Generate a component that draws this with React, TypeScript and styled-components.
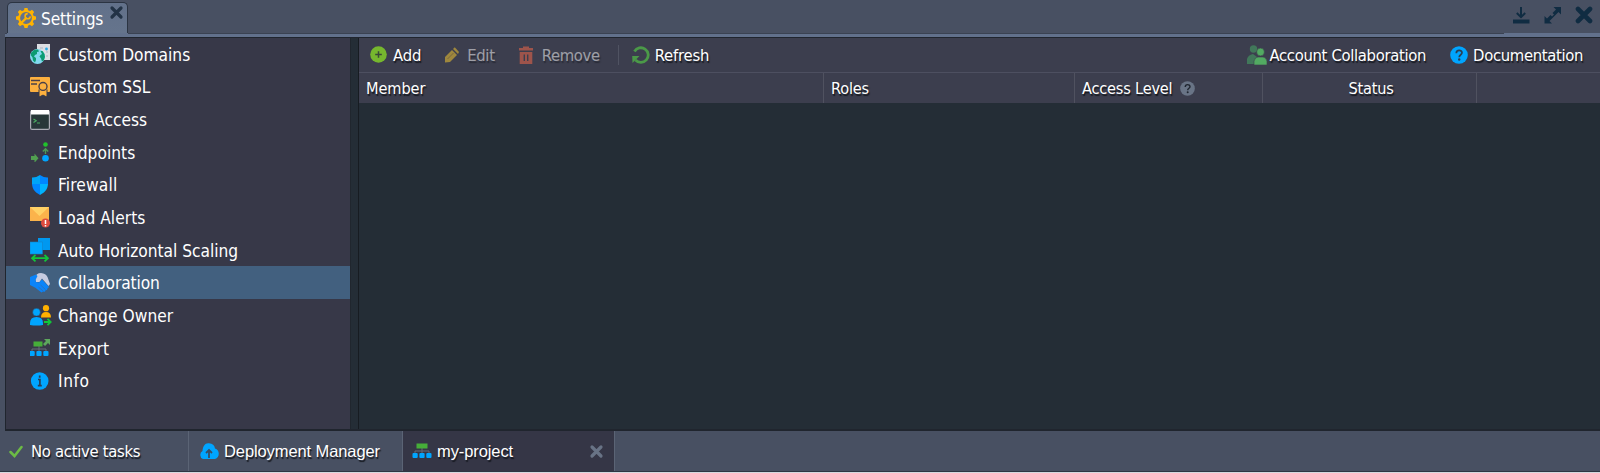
import React from "react";
import styled, { createGlobalStyle } from "styled-components";

const Global = createGlobalStyle`
  * { box-sizing: border-box; }
  body { margin: 0; background: #485062; overflow: hidden; }
`;

const tahoma = `"DejaVu Sans Condensed", "DejaVu Sans", sans-serif`;
const arial = `"Liberation Sans", Arial, sans-serif`;

const Window = styled.div`
  width: 1600px;
  height: 473px;
  display: flex;
  flex-direction: column;
  background: #485062;
  color: #fff;
  font-family: ${tahoma};
  font-stretch: condensed;
  font-size: 16.5px;
  white-space: nowrap;
`;

const Text = styled.span<{ $spacing?: number; $face?: string; $size?: number; $shadow?: boolean; $drop?: number }>`
  font-family: ${(p) => p.$face ?? tahoma};
  font-size: ${(p) => p.$size ?? 16.5}px;
  letter-spacing: ${(p) => p.$spacing ?? -0.2}px;
  line-height: 20px;
  padding-top: ${(p) => p.$drop ?? 2}px;
  text-shadow: ${(p) => (p.$shadow ? "1px 2px 1px #15181f" : "none")};
`;

const TitleBar = styled.header`
  height: 33px;
  flex: none;
  display: flex;
  justify-content: space-between;
  align-items: flex-start;
  padding: 2px 7px 0;
`;

const SettingsTab = styled.div`
  width: 121px;
  height: 31px;
  display: flex;
  align-items: flex-start;
  padding: 5px 3px 0 8px;
  background: linear-gradient(#62718a, #65748c);
  border: 1px solid #2b3442;
  border-bottom: 0;
  border-radius: 5px 5px 0 0;
  svg { flex: none; }
  ${Text} { margin: 0 0 0 5px; }
  svg:last-child { margin: -3px 0 0 auto; }
`;

const WindowTools = styled.div`
  display: flex;
  align-items: center;
  gap: 13.5px;
  margin: 4px 0 0;
`;

const Strip = styled.div`
  height: 4px;
  flex: none;
  display: flex;
`;
const StripPart = styled.div<{ $raised?: boolean; $width?: number }>`
  flex: ${(p) => (p.$width ? `0 0 ${p.$width}px` : 1)};
  background: #62718c;
  border-top: 1px solid ${(p) => (p.$raised ? "#62718c" : "#3a4252")};
`;
const StripMargin = styled.div`width: 5px;`;

const Body = styled.main`
  height: 394px;
  flex: none;
  display: flex;
  margin-left: 5px;
  background: #242d36;
  border: solid #20252e;
  border-width: 1px 0 2px 1px;
`;

const Sidebar = styled.nav`
  width: 345px;
  flex: none;
  background: #373848;
  border-right: 1px solid #20262e;
`;

const SidebarItem = styled.div<{ $active?: boolean }>`
  height: 32.65px;
  display: flex;
  align-items: center;
  padding-left: 24px;
  background: ${(p) => (p.$active ? "#42607f" : "transparent")};
`;

const MenuIcon = styled.div`
  width: 28px;
  height: 24px;
  display: flex;
  align-items: center;
  svg { flex: none; }
`;

const Panel = styled.section`
  flex: 1;
  margin-left: 7px;
  border-left: 1px solid #171c22;
`;

const Toolbar = styled.div`
  height: 35px;
  display: flex;
  align-items: center;
  padding: 0 17px 1px 11px;
  background: #3c3e4e;
  border-bottom: 1px solid #4d4f60;
`;

const ToolButton = styled.div<{ $disabled?: boolean; $gap?: number; $after?: number }>`
  display: flex;
  align-items: center;
  gap: ${(p) => p.$gap ?? 6}px;
  margin-right: ${(p) => p.$after ?? 0}px;
  opacity: ${(p) => (p.$disabled ? 0.5 : 1)};
  svg { flex: none; }
`;

const Separator = styled.div`
  width: 1px;
  height: 20px;
  margin-right: 13px;
  background: #505362;
`;
const Spacer = styled.div`flex: 1;`;

const Columns = styled.div`
  display: grid;
  grid-template-columns: 465px 251px 188px 214px 1fr;
  height: 30px;
  background: #3c3e4e;
`;
const Column = styled.div<{ $centered?: boolean }>`
  display: flex;
  align-items: center;
  justify-content: ${(p) => (p.$centered ? "center" : "flex-start")};
  padding-left: ${(p) => (p.$centered ? 3 : 7)}px;
  gap: 8px;
  border-right: 1px solid #505260;
  &:last-child { border-right: 0; }
`;

const TaskBar = styled.footer`
  height: 41px;
  flex: none;
  display: flex;
  border-bottom: 1px solid #2e3643;
  box-shadow: 0 1px 0 #d5d9df;
`;
const Task = styled.div<{ $width: number; $active?: boolean; $gap?: number; $pad?: number }>`
  width: ${(p) => p.$width}px;
  display: flex;
  align-items: center;
  gap: ${(p) => p.$gap ?? 5}px;
  padding: 0 10px 0 ${(p) => p.$pad ?? 9}px;
  background: ${(p) => (p.$active ? "#353646" : "transparent")};
  border-right: 1px solid #5b6475;
  svg:nth-of-type(2) { margin-left: auto; }
`;

const Svg = ({ w = 20, h = 20, children }: { w?: number; h?: number; children: React.ReactNode }) => (
  <svg width={w} height={h} viewBox={`0 0 ${w} ${h}`} fill="none">{children}</svg>
);

const Cross = ({ size, color, thick }: { size: number; color: string; thick: number }) => (
  <Svg w={size} h={size}>
    <path
      d={`M3 3 ${size - 3} ${size - 3}M${size - 3} 3 3 ${size - 3}`}
      stroke={color}
      strokeWidth={thick}
      strokeLinecap="round"
    />
  </Svg>
);

const GearIcon = () => (
  <Svg>
    {[0, 45, 90, 135, 180, 225, 270, 315].map((a) => (
      <path key={a} d="M7.8 3 8.5 0h3l.7 3z" fill="#ffb300" transform={`rotate(${a} 10 10)`} />
    ))}
    <circle cx="10" cy="10" r="6.9" stroke="#ffb300" strokeWidth="2" />
    <path d="m4.700 15.500 6-6" stroke="#ffb300" strokeWidth="2.400" />
    <path d="M14.300 8.400a2.600 2.600 0 1 1-2.600-2.800" stroke="#ffb300" strokeWidth="1.600" />
  </Svg>
);

const DomainsIcon = () => (
  <Svg>
    <path d="M7 0h13v16H7z" fill="#dcdee3" />
    <path d="M10 4h3m3 4h2m-2 4h2" stroke="#aeb5c2" />
    <circle cx="16.5" cy="5" r="1.4" fill="#29a9e8" />
    <circle cx="7.500" cy="12.500" r="7.500" fill="#83d9ef" />
    <path d="m1 9 3-3 4-.5 1 2-2 .5 0 2-2 1-1 1.500 2 1.500v2l-1 2.500-2-2-.5-3-1.500-2zM10.500 7l2 0 2 3 .5 3-1 3-2 1.500-1-3-1.500-2 1-1.500 1.500-1z" fill="#0d9b72" />
  </Svg>
);

const SslIcon = () => (
  <Svg>
    <path d="M1 0h18q1 0 1 1v13q0 1-1 1H1q-1 0-1-1V1q0-1 1-1z" fill="#fcb03f" />
    <path d="M1 3.500h9M1 7h6" stroke="#4b4148" strokeWidth="1.300" />
    <path d="M9 12.500V20l4-2 4 2v-7.500" fill="#fcb03f" stroke="#373848" />
    <circle cx="13" cy="9.500" r="4" fill="#fcb03f" stroke="#4b4148" strokeWidth="1.400" />
    <path d="m10.300 19 2.700-2 2.700 2v-5h-5.400z" fill="#fcb03f" />
  </Svg>
);

const TerminalIcon = () => (
  <Svg>
    <rect x=".6" y=".6" width="18.800" height="18.800" rx="1.500" fill="#273738" stroke="#a9abb3" strokeWidth="1.200" />
    <path d="M1 0h18v4.500H1z" fill="#fff" />
    <path d="m3.500 9 2.700 1.800-2.700 1.800M7 13h3" stroke="#4aa960" strokeWidth="1.200" />
  </Svg>
);

const EndpointsIcon = () => (
  <Svg>
    <circle cx="15.500" cy="2.500" r="2.300" fill="#20c22b" />
    <path d="M15.500 12V7m-2.700 2.400 2.700-2.600 2.700 2.600" stroke="#4e9a55" strokeWidth="1.400" />
    <circle cx="15.500" cy="16.300" r="3.300" fill="#00a5ff" />
    <path d="M1 14h3.500v-2.500l4 4.700-4 4.500V18H1z" fill="#519f50" />
  </Svg>
);

const ShieldIcon = () => (
  <Svg>
    <path d="M2 2.500Q6 2.700 10 0v9H2z" fill="#00a5f7" />
    <path d="M10 0q4 2.700 8 2.500V9h-8z" fill="#0087ff" />
    <path d="M2 9h8v11C4.500 17 2.500 14 2 9z" fill="#0087ff" />
    <path d="M10 9h8c-.5 5-2.500 8-8 11z" fill="#00b3ff" />
  </Svg>
);

const MailIcon = () => (
  <Svg h={22}>
    <path d="M0 0h19v14H0z" fill="#fbb34b" />
    <path d="M0 0h19l-9.500 9z" fill="#ffd166" />
    <circle cx="15.500" cy="16" r="4.500" fill="#dd4b3e" />
    <path d="M15.500 13v4m0 1v1.500" stroke="#fff" strokeWidth="1.500" />
  </Svg>
);

const ScalingIcon = () => (
  <Svg h={24}>
    <path d="M8 0h12v12H8z" fill="#0098f0" />
    <path d="M0 4h12.500v12H0z" fill="#00a5ff" stroke="#1482c5" strokeWidth=".6" />
    <path d="M2 20.200h16M5.500 17l-3.500 3.200 3.500 3.200m9-6.400 3.500 3.200-3.500 3.200" stroke="#11c63a" strokeWidth="1.700" />
  </Svg>
);

const HandshakeIcon = () => (
  <Svg>
    <path d="M5 5Q6 0 11 0q5 .5 6.500 4L20 11l-1.500 2L12 5.500 9.500 9 6 9z" fill="#c5cbe0" />
    <path d="M0 4 6 1.500 7.500 3 5.500 7l.5 2 3 .5L12 6.500l7 7.500-1.500 1.500-.5 1.500-1.500.3-.5 1.500-2-.3L11.500 19.500 5 14.500 0 12z" fill="#0a84fa" />
    <path d="m10.500 12 5 4.500M8.500 14l4.500 4" stroke="#3a6ca5" strokeWidth=".7" />
  </Svg>
);

const OwnerIcon = () => (
  <Svg w={22} h={21}>
    <circle cx="16" cy="3.200" r="3.100" fill="#ffb000" />
    <path d="M11 12.500q0-5.500 5-5.500t5 5.500z" fill="#ffb000" />
    <circle cx="6.500" cy="7.200" r="3.900" fill="#00a5ff" stroke="#373848" strokeWidth=".5" />
    <path d="M0 20v-2q0-6 6.500-6t6.500 6v2q-6.500 1-13 0z" fill="#00a5ff" />
    <path d="M14 17h6.500m-3-3.200 3.200 3.200-3.200 3.200" stroke="#11c63a" strokeWidth="1.800" />
  </Svg>
);

const TreeIcon = ({ arrow }: { arrow?: boolean }) => (
  <Svg h={arrow ? 20 : 16}>
    <g transform={arrow ? "translate(-1 3)" : undefined}>
      <path d="M10 5v6M3 11V8h14v3" stroke="#676c7b" />
      <rect x="4.500" y=".5" width={arrow ? 9 : 11} height="5" fill="#46ad39" />
      <rect x=".5" y="10" width="5.200" height="5" rx="1" fill="#00a5ff" />
      <rect x="7.400" y="10" width="5.200" height="5" rx="1" fill="#00a5ff" />
      <rect x="14.300" y="10" width="5.200" height="5" rx="1" fill="#00a5ff" />
    </g>
    {arrow && <path d="M14 1h6v6l-2-2-3 3-2-2 3-3z" fill="#5da75d" />}
  </Svg>
);

const InfoIcon = () => (
  <Svg>
    <circle cx="9.700" cy="10" r="8.800" fill="#00a5ff" />
    <path d="M9.700 4.500v2.200M8 8.500h1.900v6M7.800 14.700h4" stroke="#283f56" strokeWidth="1.700" />
  </Svg>
);

const AddIcon = () => (
  <Svg w={17} h={17}>
    <circle cx="8.500" cy="8.500" r="8.300" fill="#76b72e" />
    <path d="M8.500 5.200v6.600M5.200 8.500h6.600" stroke="#394938" strokeWidth="1.500" />
  </Svg>
);

const PencilIcon = () => (
  <Svg w={15} h={16}>
    <path d="m1 10 7-7 5 5-7 7-5 .5z" fill="#ffd02e" />
    <path d="m9 2 1.800-1.800 4.200 4.800L14 7z" fill="#ffd02e" />
    <path d="m3.500 12 6-6" stroke="#b68d31" />
  </Svg>
);

const TrashIcon = () => (
  <Svg w={14} h={18}>
    <path d="M0 2h4V.5h6V2h4v2.500H0zM.7 6h12.600v12H.7z" fill="#ff6a4a" />
    <path d="M5.300 8.500V15M8.700 8.500V15" stroke="#3c3e4e" strokeWidth="1.400" />
  </Svg>
);

const RefreshIcon = () => (
  <Svg w={18} h={18}>
    <path d="M2.500 5.500a7.300 7.300 0 1 1 1 8.500" stroke="#4b9948" strokeWidth="2.800" />
    <path d="M.2 10h7.300L.5 17z" fill="#4b9948" />
  </Svg>
);

const PeopleIcon = () => (
  <Svg w={20} h={20}>
    <g fill="#41775a"><circle cx="6.500" cy="4" r="3.700" /><path d="M0 19v-5q1-4 6-5l4 3v7z" /></g>
    <g fill="#52aa62" stroke="#3c3e4e" strokeWidth=".6"><circle cx="13.500" cy="7" r="3.900" /><path d="M7 20v-4q1-4 4-4h5q3 0 4 4v4z" /></g>
  </Svg>
);

const HelpIcon = ({ size, fill, ink }: { size: number; fill: string; ink: string }) => (
  <svg width={size} height={size} viewBox="0 0 18 18" fill="none">
    <circle cx="9" cy="9" r="8.800" fill={fill} />
    <path d="M6.300 7.200C6.300 3.500 12 3.500 12 6.800 12 8.800 9.200 8.700 9.200 11.200" stroke={ink} strokeWidth="1.700" />
    <circle cx="9.200" cy="13.500" r="1.200" fill={ink} />
  </svg>
);

const ExportIcon = () => <TreeIcon arrow />;

const menu: [string, () => React.JSX.Element, number][] = [
  ["Custom Domains", DomainsIcon, 0],
  ["Custom SSL", SslIcon, 0],
  ["SSH Access", TerminalIcon, 0],
  ["Endpoints", EndpointsIcon, 0.05],
  ["Firewall", ShieldIcon, 0.15],
  ["Load Alerts", MailIcon, 0.05],
  ["Auto Horizontal Scaling", ScalingIcon, -0.03],
  ["Collaboration", HandshakeIcon, -0.1],
  ["Change Owner", OwnerIcon, 0.05],
  ["Export", ExportIcon, 0.1],
  ["Info", InfoIcon, 0.6],
];

export default function App() {
  return (
    <Window>
      <Global />
      <TitleBar>
        <SettingsTab>
          <GearIcon />
          <Text $size={17.2} $spacing={-0.15} $drop={1}>Settings</Text>
          <Cross size={15} color="#233346" thick={3.2} />
        </SettingsTab>
        <WindowTools>
          <Svg w={18} h={18}>
            <path d="M9 1v10M4.800 7 9 11.200 13.200 7" stroke="#102c42" strokeWidth="2" />
            <path d="M1 13.500h16.500v4H1z" fill="#102c42" />
          </Svg>
          <Svg w={18} h={18}>
            <path d="M9.500 1H17v7.500l-2.500-2.500-9 9L8 17.500H.5V10L3 12.500l3.500-3.500 1.500 1.500 2-2L8.500 7 12 3.500z" fill="#102c42" />
          </Svg>
          <Cross size={18} color="#102c42" thick={4.6} />
        </WindowTools>
      </TitleBar>
      <Strip>
        <StripMargin />
        <StripPart $width={2} />
        <StripPart $raised $width={121} />
        <StripPart />
        <StripPart $raised $width={96} />
      </Strip>
      <Body>
        <Sidebar>
          {menu.map(([label, Icon, spacing]) => (
            <SidebarItem key={label} $active={label === "Collaboration"}>
              <MenuIcon><Icon /></MenuIcon>
              <Text $size={17.2} $spacing={spacing} $drop={1}>{label}</Text>
            </SidebarItem>
          ))}
        </Sidebar>
        <Panel>
          <Toolbar>
            <ToolButton $after={23}><AddIcon /><Text $shadow>Add</Text></ToolButton>
            <ToolButton $disabled $gap={8} $after={24}><PencilIcon /><Text $shadow $spacing={-0.3}>Edit</Text></ToolButton>
            <ToolButton $disabled $gap={9} $after={18}><TrashIcon /><Text $shadow $spacing={-0.35}>Remove</Text></ToolButton>
            <Separator />
            <ToolButton $gap={5}><RefreshIcon /><Text $shadow>Refresh</Text></ToolButton>
            <Spacer />
            <ToolButton $gap={2} $after={24}><PeopleIcon /><Text $shadow $spacing={-0.33}>Account Collaboration</Text></ToolButton>
            <ToolButton $gap={5}><HelpIcon size={18} fill="#00a5ff" ink="#283f56" /><Text $shadow $spacing={-0.35}>Documentation</Text></ToolButton>
          </Toolbar>
          <Columns>
            <Column><Text $size={16.2} $shadow $spacing={-0.1}>Member</Text></Column>
            <Column><Text $size={16.2} $shadow>Roles</Text></Column>
            <Column><Text $size={16.2} $shadow>Access Level</Text><HelpIcon size={15} fill="#697486" ink="#202630" /></Column>
            <Column $centered><Text $size={16.2} $shadow>Status</Text></Column>
            <Column />
          </Columns>
        </Panel>
      </Body>
      <TaskBar>
        <Task $width={189} $gap={8}>
          <Svg w={14} h={13}><path d="m1.500 7 4 4 7-9" stroke="#6cbb45" strokeWidth="2.500" strokeLinecap="round" /></Svg>
          <Text $shadow $spacing={-0.3}>No active tasks</Text>
        </Task>
        <Task $width={214} $pad={10}>
          <Svg w={20} h={16}>
            <path d="M4 16a4.500 4.500 0 0 1-.5-8C4 3 6-.2 10 .3c3.500 0 5.500 2.200 6 5.200 5 1 5 9.500 0 10.500z" fill="#00a5ff" />
            <path d="M10 15V7M7 10l3-3 3 3" stroke="#374d65" strokeWidth="1.800" />
          </Svg>
          <Text $face={arial} $shadow $spacing={-0.1} $drop={0}>Deployment Manager</Text>
        </Task>
        <Task $width={212} $active $pad={9}>
          <TreeIcon />
          <Text $face={arial} $shadow $spacing={-0.1} $drop={0}>my-project</Text>
          <Cross size={15} color="#687385" thick={3.2} />
        </Task>
      </TaskBar>
    </Window>
  );
}
